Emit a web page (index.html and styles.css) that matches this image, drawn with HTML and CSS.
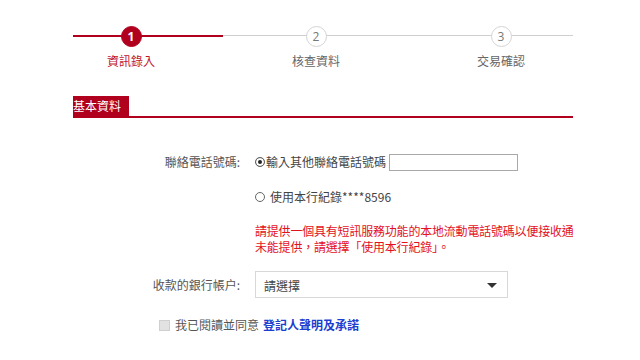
FILE: index.html
```html
<!DOCTYPE html>
<html lang="zh-Hant">
<head>
<meta charset="utf-8">
<title>資訊錄入</title>
<link rel="stylesheet" href="styles.css">
</head>
<body>
<div class="page">
  <div class="steps">
    <div class="step active"><span class="dot">1</span><span class="step-label">資訊錄入</span></div>
    <div class="step"><span class="dot">2</span><span class="step-label">核查資料</span></div>
    <div class="step"><span class="dot">3</span><span class="step-label">交易確認</span></div>
  </div>

  <div class="section-head"><span class="section-title">基本資料</span></div>

  <div class="form">
    <div class="label">聯絡電話號碼:</div>
    <div class="field">
      <span class="radio checked"></span><span class="opt">輸入其他聯絡電話號碼</span><span class="textbox"></span>
    </div>

    <div class="field row2">
      <span class="radio"></span><span class="opt2">使用本行紀錄****8596</span>
    </div>

    <div class="field msg">請提供一個具有短訊服務功能的本地流動電話號碼以便接收通知。如<br>未能提供，請選擇「使用本行紀錄」。</div>

    <div class="label lbl-select">收款的銀行帳户:</div>
    <div class="field">
      <div class="select"><span>請選擇</span><span class="caret"></span></div>
    </div>
  </div>

  <div class="agree">
    <span class="checkbox"></span><span>我已閱讀並同意</span><a class="link" href="#">登記人聲明及承諾</a>
  </div>
</div>
</body>
</html>
```

FILE: styles.css
```css
html, body {
  margin: 0;
  padding: 0;
  background: #fff;
}
body {
  font-family: "Noto Sans CJK TC", "Noto Sans", sans-serif;
  font-size: 12px;
  color: #444;
}
.page {
  width: 500px;
  margin-left: 73px;
  overflow: hidden;
  padding-top: 26px;
}
.steps {
  display: flex;
  gap: 69px;
  background:
    linear-gradient(#b0001e, #b0001e) 0 35px / 150px 2px no-repeat,
    linear-gradient(#cfcfcf, #cfcfcf) 150px 35px / 350px 1px no-repeat;
  background-origin: border-box;
  margin-top: -26px;
  padding-top: 26px;
}
.step {
  width: 116px;
  display: flex;
  flex-direction: column;
  align-items: center;
}
.dot {
  width: 19px;
  height: 19px;
  border: 1px solid #d4d4d4;
  border-radius: 50%;
  background: #fff;
  color: #777;
  font-family: "Open Sans", sans-serif;
  font-size: 12px;
  line-height: 19px;
  text-align: center;
}
.step.active .dot {
  background: #b0001e;
  border-color: #b0001e;
  color: #fff;
  font-weight: 700;
}
.step-label {
  margin-top: 6px;
  line-height: 16px;
  color: #666;
}
.step.active .step-label {
  color: #c0142c;
}
.section-head {
  margin-top: 27px;
  border-bottom: 2px solid #b0001e;
  display: flex;
}
.section-title {
  background: #b0001e;
  color: #fff;
  line-height: 20px;
  height: 20px;
  padding-right: 8px;
}
.form {
  margin-top: 35px;
  display: grid;
  grid-template-columns: 167px 1fr;
  column-gap: 15px;
  align-items: center;
}
.label {
  text-align: right;
  color: #555;
  line-height: 18px;
  white-space: nowrap;
}
.field {
  grid-column: 2;
  display: flex;
  align-items: center;
  white-space: nowrap;
  line-height: 18px;
  color: #444;
}
.radio {
  width: 8px;
  height: 8px;
  border: 1px solid #666;
  border-radius: 50%;
  background: #fff;
  flex: none;
}
.radio.checked {
  background: #222;
  box-shadow: inset 0 0 0 2px #fff;
}
.opt { margin-left: 1px; }
.opt2 { margin-left: 5px; }
.textbox {
  width: 129px;
  height: 17px;
  border: 1px solid #a8a8a8;
  margin-left: 3px;
  box-sizing: border-box;
}
.row2 { margin-top: 17px; }
.msg {
  display: block;
  margin-top: 17px;
  line-height: 16px;
  letter-spacing: -0.2px;
  color: #e3101e;
}
.lbl-select { margin-top: 16px; }
.select {
  margin-top: 16px;
  width: 253px;
  height: 27px;
  border: 1px solid #d8d8d8;
  box-sizing: border-box;
  display: flex;
  align-items: center;
  justify-content: space-between;
  padding: 2px 10px 0 8px;
  color: #444;
}
.caret {
  width: 0;
  height: 0;
  border-left: 5px solid transparent;
  border-right: 5px solid transparent;
  border-top: 5px solid #333;
}
.agree {
  margin-top: 18px;
  padding-left: 86px;
  display: flex;
  align-items: center;
  line-height: 18px;
  color: #555;
}
.checkbox {
  width: 11px;
  height: 11px;
  box-sizing: border-box;
  border: 1px solid #cfcfcf;
  background: #e2e2e2;
  margin-right: 5px;
}
.link {
  margin-left: 4px;
  color: #1d3fcf;
  font-weight: 700;
  text-decoration: none;
}
```
